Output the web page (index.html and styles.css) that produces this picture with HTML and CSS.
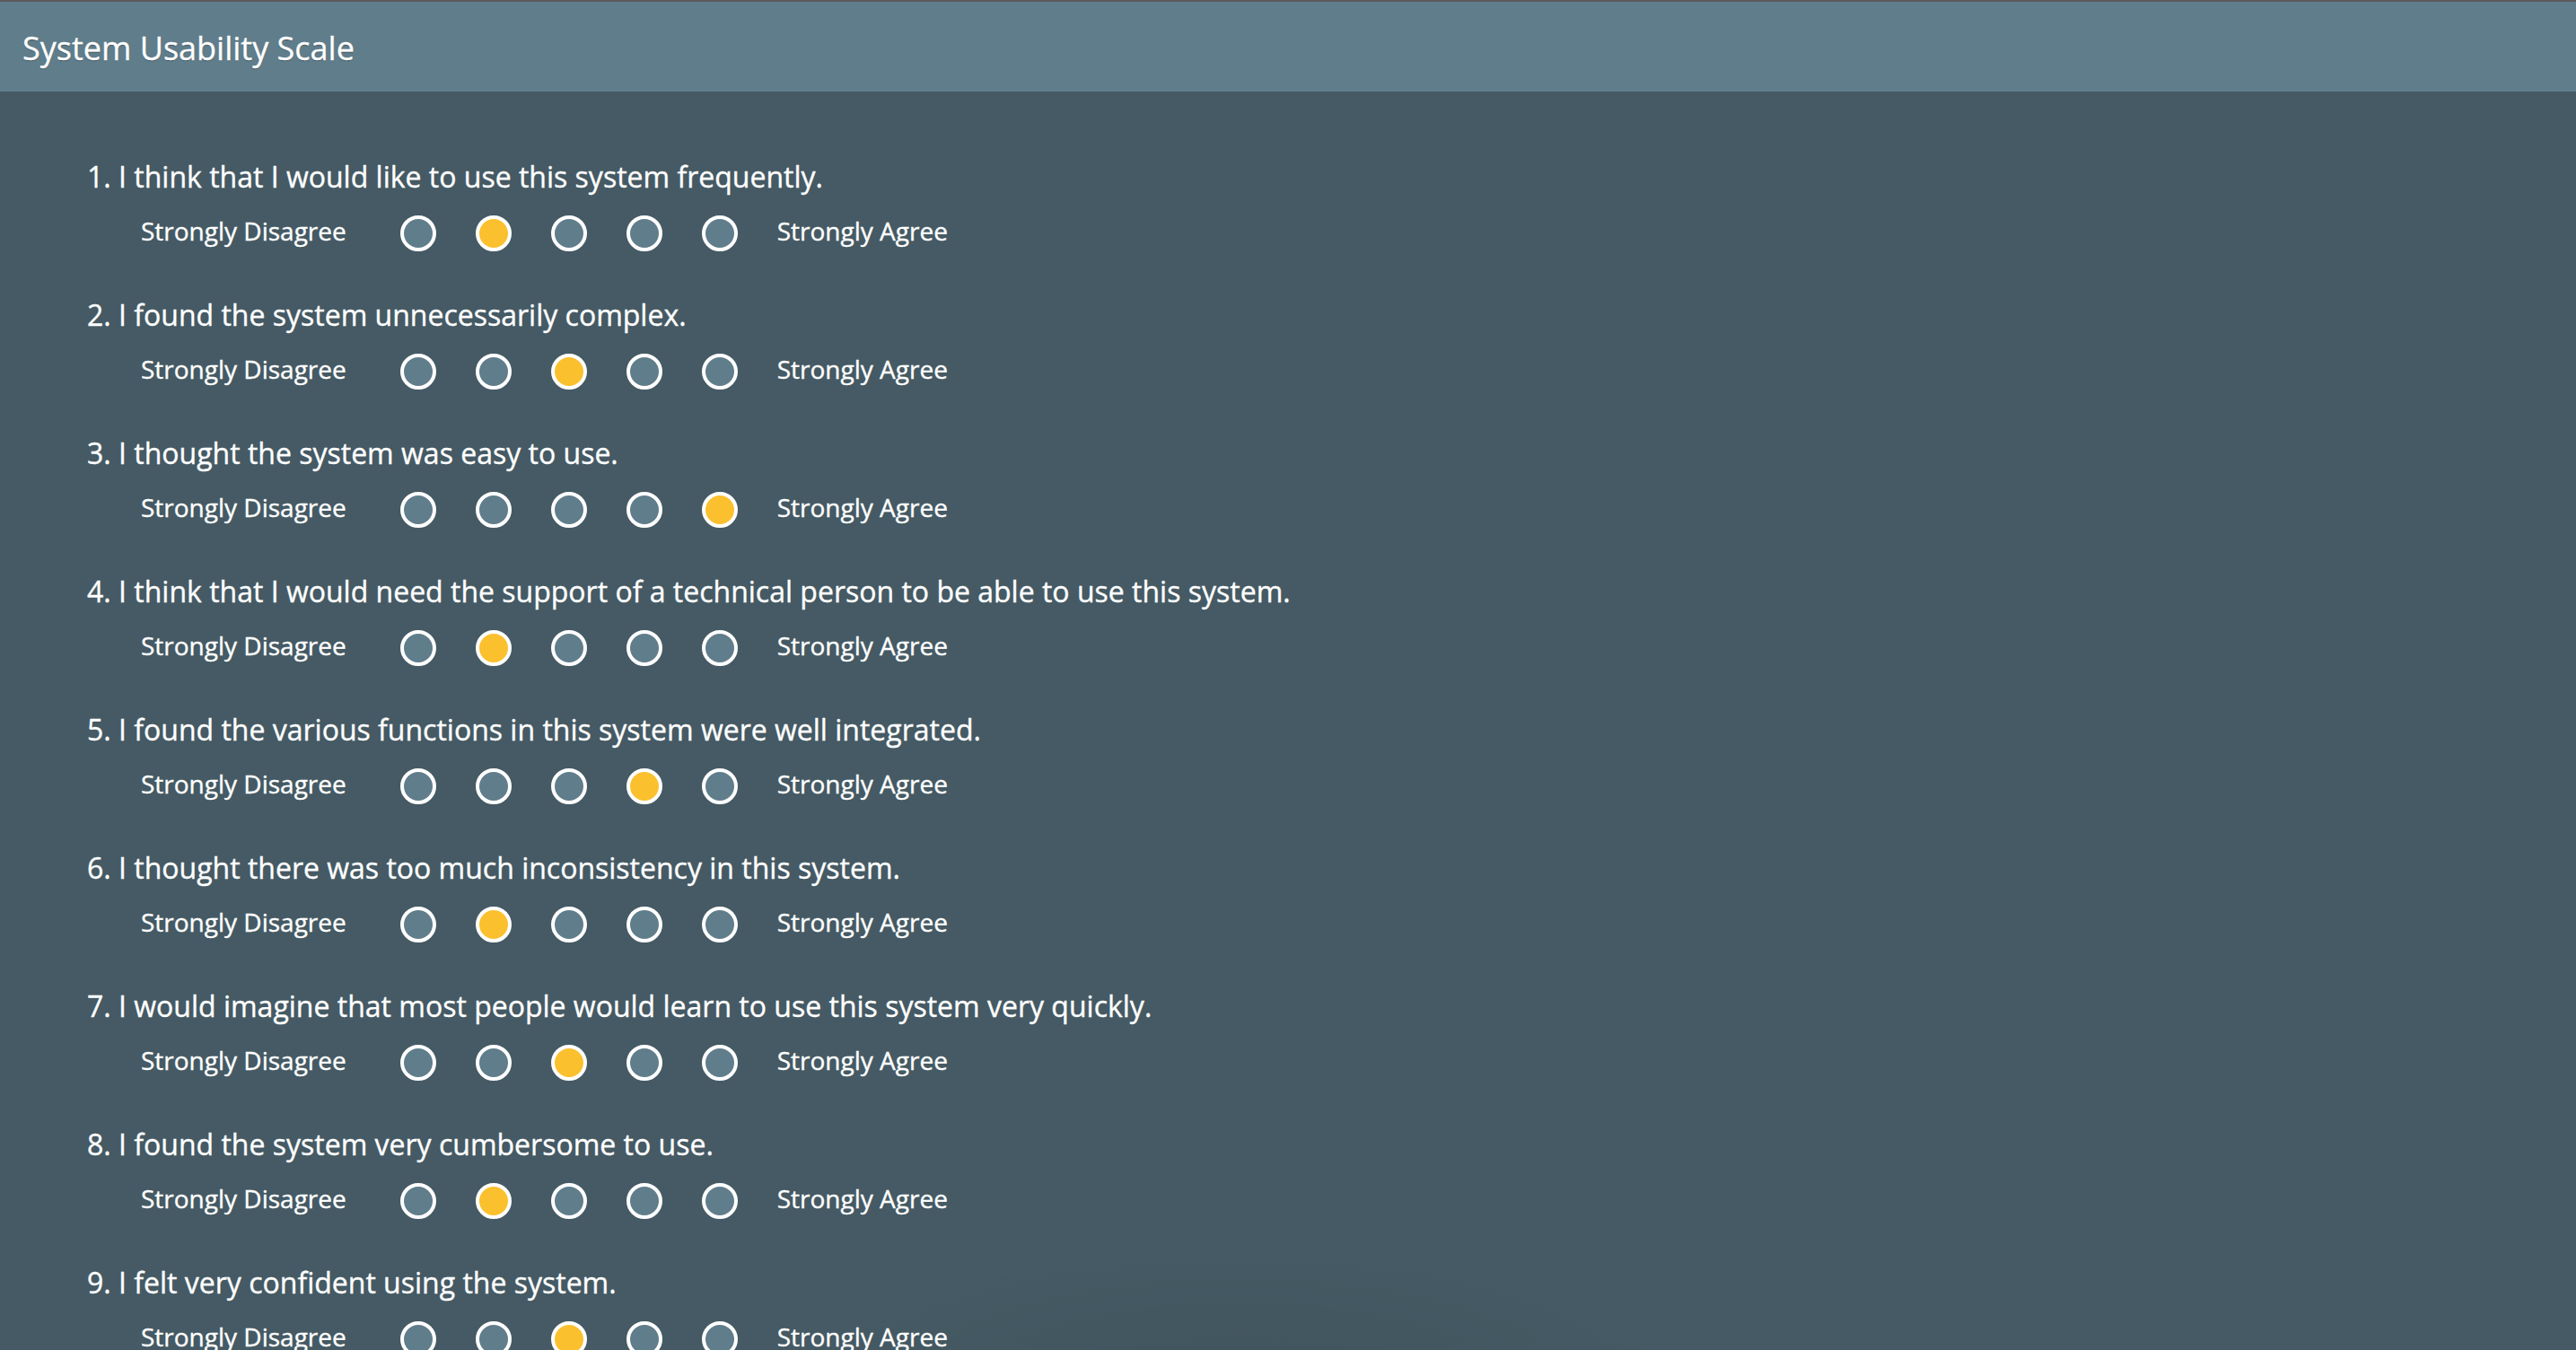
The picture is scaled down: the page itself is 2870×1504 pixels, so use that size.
FILE: index.html
```html
<!DOCTYPE html>
<html lang="en">
<head>
<meta charset="utf-8">
<title>System Usability Scale</title>
<link rel="stylesheet" href="styles.css">
</head>
<body>
<header class="topbar">
  <h1 class="title">System Usability Scale</h1>
</header>
<main class="survey">
  <div class="question">
    <p class="q-text">1. I think that I would like to use this system frequently.</p>
    <div class="scale">
      <span class="label">Strongly Disagree</span>
      <div class="radios">
        <input type="radio" name="q1"><input type="radio" name="q1" checked><input type="radio" name="q1"><input type="radio" name="q1"><input type="radio" name="q1">
      </div>
      <span class="label">Strongly Agree</span>
    </div>
  </div>
  <div class="question">
    <p class="q-text">2. I found the system unnecessarily complex.</p>
    <div class="scale">
      <span class="label">Strongly Disagree</span>
      <div class="radios">
        <input type="radio" name="q2"><input type="radio" name="q2"><input type="radio" name="q2" checked><input type="radio" name="q2"><input type="radio" name="q2">
      </div>
      <span class="label">Strongly Agree</span>
    </div>
  </div>
  <div class="question">
    <p class="q-text">3. I thought the system was easy to use.</p>
    <div class="scale">
      <span class="label">Strongly Disagree</span>
      <div class="radios">
        <input type="radio" name="q3"><input type="radio" name="q3"><input type="radio" name="q3"><input type="radio" name="q3"><input type="radio" name="q3" checked>
      </div>
      <span class="label">Strongly Agree</span>
    </div>
  </div>
  <div class="question">
    <p class="q-text">4. I think that I would need the support of a technical person to be able to use this system.</p>
    <div class="scale">
      <span class="label">Strongly Disagree</span>
      <div class="radios">
        <input type="radio" name="q4"><input type="radio" name="q4" checked><input type="radio" name="q4"><input type="radio" name="q4"><input type="radio" name="q4">
      </div>
      <span class="label">Strongly Agree</span>
    </div>
  </div>
  <div class="question">
    <p class="q-text">5. I found the various functions in this system were well integrated.</p>
    <div class="scale">
      <span class="label">Strongly Disagree</span>
      <div class="radios">
        <input type="radio" name="q5"><input type="radio" name="q5"><input type="radio" name="q5"><input type="radio" name="q5" checked><input type="radio" name="q5">
      </div>
      <span class="label">Strongly Agree</span>
    </div>
  </div>
  <div class="question">
    <p class="q-text">6. I thought there was too much inconsistency in this system.</p>
    <div class="scale">
      <span class="label">Strongly Disagree</span>
      <div class="radios">
        <input type="radio" name="q6"><input type="radio" name="q6" checked><input type="radio" name="q6"><input type="radio" name="q6"><input type="radio" name="q6">
      </div>
      <span class="label">Strongly Agree</span>
    </div>
  </div>
  <div class="question">
    <p class="q-text">7. I would imagine that most people would learn to use this system very quickly.</p>
    <div class="scale">
      <span class="label">Strongly Disagree</span>
      <div class="radios">
        <input type="radio" name="q7"><input type="radio" name="q7"><input type="radio" name="q7" checked><input type="radio" name="q7"><input type="radio" name="q7">
      </div>
      <span class="label">Strongly Agree</span>
    </div>
  </div>
  <div class="question">
    <p class="q-text">8. I found the system very cumbersome to use.</p>
    <div class="scale">
      <span class="label">Strongly Disagree</span>
      <div class="radios">
        <input type="radio" name="q8"><input type="radio" name="q8" checked><input type="radio" name="q8"><input type="radio" name="q8"><input type="radio" name="q8">
      </div>
      <span class="label">Strongly Agree</span>
    </div>
  </div>
  <div class="question">
    <p class="q-text">9. I felt very confident using the system.</p>
    <div class="scale">
      <span class="label">Strongly Disagree</span>
      <div class="radios">
        <input type="radio" name="q9"><input type="radio" name="q9"><input type="radio" name="q9" checked><input type="radio" name="q9"><input type="radio" name="q9">
      </div>
      <span class="label">Strongly Agree</span>
    </div>
  </div>
  <div class="question">
    <p class="q-text">10. I needed to learn a lot of things before I could get going with this system.</p>
    <div class="scale">
      <span class="label">Strongly Disagree</span>
      <div class="radios">
        <input type="radio" name="q10"><input type="radio" name="q10" checked><input type="radio" name="q10"><input type="radio" name="q10"><input type="radio" name="q10">
      </div>
      <span class="label">Strongly Agree</span>
    </div>
  </div>
</main>
</body>
</html>
```

FILE: styles.css
```css
html, body {
  margin: 0;
  padding: 0;
}
body {
  background:
    radial-gradient(ellipse 520px 180px at 1380px 1560px, rgba(0, 0, 0, 0.07), rgba(0, 0, 0, 0)),
    #455a64;
  font-family: "Open Sans", "Noto Sans", "Liberation Sans", sans-serif;
  color: #ffffff;
  -webkit-text-stroke: 0.35px #ffffff;
}
.topbar {
  border-top: 2px solid #5e5a5d;
  height: 100px;
  background: #607d8b;
  padding-left: 25px;
  display: flex;
  align-items: center;
}
.title {
  margin: 0;
  padding-top: 3px;
  font-size: 36px;
  font-weight: 400;
  line-height: 97px;
  text-shadow: 0 1px 1px rgba(0, 0, 0, 0.35);
}
.survey {
  padding: 73px 0 0 97px;
}
.question {
  margin-bottom: 49px;
}
.q-text {
  margin: 0;
  font-size: 32px;
  line-height: 44px;
}
.scale {
  margin-top: 21px;
  padding-left: 60px;
  display: flex;
  align-items: center;
  height: 40px;
}
.label {
  font-size: 28px;
  line-height: 40px;
  position: relative;
  top: -3px;
}
.radios {
  display: flex;
  gap: 44px;
  margin: 0 44px 0 60px;
}
.radios input {
  appearance: none;
  -webkit-appearance: none;
  margin: 0;
  width: 40px;
  height: 40px;
  box-sizing: border-box;
  border: 4px solid #ffffff;
  border-radius: 50%;
  background: #607d8b;
}
.radios input:checked {
  background: #fbc02d;
}
```
